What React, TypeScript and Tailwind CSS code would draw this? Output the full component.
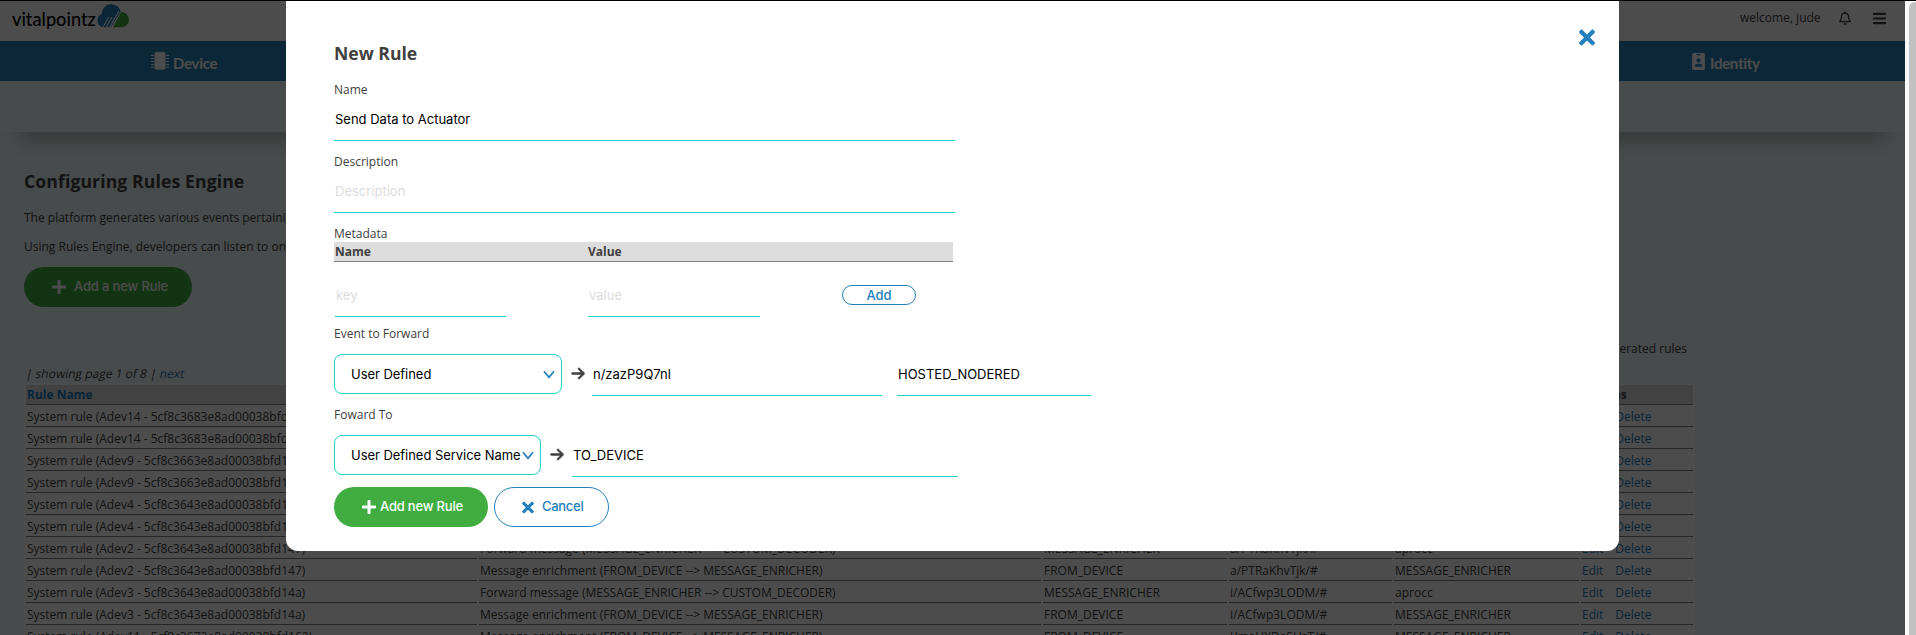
import type { ReactNode } from "react";
import { FaBars, FaIdBadge, FaPlus, FaRegBell, FaTimes } from "react-icons/fa";
import { FaArrowRight } from "react-icons/fa6";

type Rule = {
  name: string;
  description: string;
  source: string;
  topic: string;
  target: string;
};

const FORWARD = "Forward message (MESSAGE_ENRICHER --> CUSTOM_DECODER)";
const ENRICH = "Message enrichment (FROM_DEVICE --> MESSAGE_ENRICHER)";

function forward(name: string, topic: string): Rule {
  return { name, description: FORWARD, source: "MESSAGE_ENRICHER", topic, target: "aprocc" };
}

function enrich(name: string, topic: string): Rule {
  return { name, description: ENRICH, source: "FROM_DEVICE", topic, target: "MESSAGE_ENRICHER" };
}

const rules: Rule[] = [
  forward("System rule (Adev14 - 5cf8c3683e8ad00038bfd15c)", "i/ACfwp3LODM/#"),
  enrich("System rule (Adev14 - 5cf8c3683e8ad00038bfd15c)", "i/ACfwp3LODM/#"),
  forward("System rule (Adev9 - 5cf8c3663e8ad00038bfd156)", "i/ACfwp3LODM/#"),
  enrich("System rule (Adev9 - 5cf8c3663e8ad00038bfd156)", "i/ACfwp3LODM/#"),
  forward("System rule (Adev4 - 5cf8c3643e8ad00038bfd14d)", "i/ACfwp3LODM/#"),
  enrich("System rule (Adev4 - 5cf8c3643e8ad00038bfd14d)", "i/ACfwp3LODM/#"),
  forward("System rule (Adev2 - 5cf8c3643e8ad00038bfd147)", "a/PTRaKhvTjk/#"),
  enrich("System rule (Adev2 - 5cf8c3643e8ad00038bfd147)", "a/PTRaKhvTjk/#"),
  forward("System rule (Adev3 - 5cf8c3643e8ad00038bfd14a)", "i/ACfwp3LODM/#"),
  enrich("System rule (Adev3 - 5cf8c3643e8ad00038bfd14a)", "i/ACfwp3LODM/#"),
  enrich("System rule (Adev11 - 5cf8c3673e8ad00038bfd162)", "i/maHXDaSHzT/#"),
];

const GRID = "grid grid-cols-[451px_562px_184px_163px_185px_112px] gap-x-[2px]";

function Cell({ children, className = "" }: { children?: ReactNode; className?: string }) {
  return (
    <div className={`h-5 whitespace-nowrap border-b border-[#808080] pl-px leading-[19px] ${className}`}>
      {children}
    </div>
  );
}

function Logo() {
  return (
    <div className="flex items-start pl-3 pt-[4px]">
      <span className="mt-[3px] w-[85px] whitespace-nowrap font-['Lato',sans-serif] text-[18.2px] font-medium leading-6 text-black">
        vitalpointz
      </span>
      <svg width="32" height="24" viewBox="0 0 96 72">
        <path d="M20 70 A21 21 0 0 1 14 30 A29 29 0 0 1 71 22 L42 70 Z" fill="#2480bd" />
        <path d="M48 70 L72 24 A23 23 0 1 1 74 70 Z" fill="#41ad41" />
        <path d="M17 71 L35 39 M27 71 L45 39 M37 71 L66 21" stroke="#fff" strokeWidth="3.4" />
      </svg>
    </div>
  );
}

function ChipIcon() {
  return (
    <svg width="18" height="18" viewBox="0 0 18 18" fill="#fff">
      <rect x="3.5" y="0" width="11" height="17.5" rx="1.6" />
      <path
        d="M0 3.5h3M0 6.5h3M0 9.5h3M0 12.5h3M0 15h3M15 3.5h3M15 6.5h3M15 9.5h3M15 12.5h3M15 15h3"
        stroke="#fff"
        strokeWidth="1.2"
      />
    </svg>
  );
}

function Chevron() {
  return (
    <svg width="12" height="9" viewBox="0 0 12 9" fill="none" stroke="#2480bd" strokeWidth="1.7">
      <path d="M1 1.2 L6 7.4 L11 1.2" />
    </svg>
  );
}

function Arrow() {
  return (
    <FaArrowRight
      className="ml-[9px] mt-[12px] h-[15px] w-[14px] shrink-0 overflow-visible text-[#404040]"
      stroke="currentColor"
      strokeWidth="18"
    />
  );
}

function Page() {
  return (
    <div className="flex h-[635px] w-[1905px] flex-col overflow-hidden bg-[#f0fafa]">
      <header className="flex h-[41px] shrink-0 justify-between bg-white">
        <Logo />
        <div className="flex h-9 items-center pr-[19px] text-[#404040]">
          <span className="w-[99px] text-[12px]">welcome, jude</span>
          <FaRegBell className="h-[14px] w-[12px]" />
          <FaBars className="ml-[22px] h-[15px] w-[13px]" />
        </div>
      </header>
      <nav className="flex h-10 shrink-0 items-center justify-between bg-[#2882b8] pl-[151px] pr-[145px] font-['Lato',sans-serif] text-[15px] font-bold tracking-[-0.3px] text-white">
        <div className="flex items-center gap-[4px]">
          <ChipIcon />
          <span className="pt-1">Device</span>
        </div>
        <div className="flex items-center gap-[5px]">
          <FaIdBadge className="h-[17px] w-[13px]" />
          <span className="w-[50px] pt-1">Identity</span>
        </div>
      </nav>
      <div className="h-[51px] shrink-0 bg-[#f0fafa] shadow-[0_24px_20px_-20px_rgba(0,0,0,0.45)]" />

      <main className="flex flex-col text-[12px] text-[#404040]">
        <div className="flex flex-col items-start pl-6 pt-[37px]">
          <h1 className="text-[17.6px] font-bold leading-6 tracking-[0.11px]">Configuring Rules Engine</h1>
          <p className="mt-[15px] whitespace-nowrap leading-[19px]">
            The platform generates various events pertaining to devices
          </p>
          <p className="mt-[10px] whitespace-nowrap leading-[19px]">
            Using Rules Engine, developers can listen to one or more events
          </p>
          <button className="mt-[11px] flex h-10 w-[168px] items-center rounded-full bg-[#41ad41] pl-[27px] font-['Inter',sans-serif] text-[13px] font-medium text-white">
            <FaPlus className="mr-[7px] h-[16px] w-[16px]" />
            <span className="tracking-[-0.15px]">Add a new Rule</span>
          </button>
        </div>
        <div className="mt-[33px] w-[1687px] text-right leading-[18px]">system generated rules</div>
        <div className="mt-[7px] w-[200px] -skew-x-12 pl-[26px] leading-[18px]">
          | showing page 1 of 8 | <a className="text-[#1c7ab8]">next</a>
        </div>
        <div className="ml-6 flex w-[1671px] flex-col gap-[2px] bg-white px-[2px] pt-[2px]">
          <div className={`${GRID} font-bold`}>
            <Cell className="bg-[#ddd] text-[#1c7ab8]">Rule Name</Cell>
            <Cell className="bg-[#ddd]">Description</Cell>
            <Cell className="bg-[#ddd]">Source</Cell>
            <Cell className="bg-[#ddd]">Topic</Cell>
            <Cell className="bg-[#ddd]">Destination</Cell>
            <Cell className="bg-[#ddd]">Actions</Cell>
          </div>
          {rules.map((rule, i) => (
            <div key={i} className={GRID}>
              <Cell>{rule.name}</Cell>
              <Cell>{rule.description}</Cell>
              <Cell>{rule.source}</Cell>
              <Cell>{rule.topic}</Cell>
              <Cell>{rule.target}</Cell>
              <Cell className="text-[#1c7ab8]">
                <a className="mr-[12px]">Edit</a>
                <a>Delete</a>
              </Cell>
            </div>
          ))}
        </div>
      </main>
    </div>
  );
}

function Label({ children, className = "" }: { children: ReactNode; className?: string }) {
  return <label className={`block text-[12px] leading-[18px] text-[#404040] ${className}`}>{children}</label>;
}

function Field({ value, placeholder, className = "" }: { value?: string; placeholder?: string; className?: string }) {
  return (
    <input
      defaultValue={value}
      placeholder={placeholder}
      className={`h-[42px] border-b border-[#1dd3c5] bg-transparent pb-[2px] pl-px font-['Inter',sans-serif] text-[13px] text-black outline-none placeholder:text-[#dcdcdc] ${className}`}
    />
  );
}

function Select({ value, className = "" }: { value: string; className?: string }) {
  return (
    <div
      className={`flex h-10 items-center justify-between whitespace-nowrap rounded-lg border border-[#1dd3c5] pl-4 pr-[6px] font-['Inter',sans-serif] text-[13px] tracking-[-0.04px] text-black ${className}`}
    >
      <span className="pt-px">{value}</span>
      <Chevron />
    </div>
  );
}

function RuleModal() {
  return (
    <section className="relative flex h-[550px] w-[1333px] flex-col rounded-b-xl bg-white pl-12 pt-10">
      <button className="absolute right-[23px] top-[25px] flex text-[#2480bd]">
        <FaTimes className="h-[23px] w-[18px]" />
      </button>
      <h2 className="text-[17.6px] font-bold leading-6 text-[#404040]">New Rule</h2>
      <Label className="mt-4">Name</Label>
      <Field value="Send Data to Actuator" className="w-[621px]" />
      <Label className="mt-3">Description</Label>
      <Field placeholder="Description" className="w-[621px]" />
      <Label className="mt-3 h-[17px]">Metadata</Label>
      <div className="flex h-5 w-[619px] border-b border-[#808080] bg-[#ddd] pl-px text-[12px] font-bold leading-[19px] text-[#404040]">
        <span className="w-[253px]">Name</span>
        <span>Value</span>
      </div>
      <div className="flex pl-px pt-[13px]">
        <Field placeholder="key" className="w-[171px]" />
        <Field placeholder="value" className="ml-[82px] w-[172px]" />
        <button className="ml-[82px] mt-[10px] h-5 w-[74px] rounded-full border border-[#2480bd] font-['Inter',sans-serif] text-[13px] font-medium leading-[18px] text-[#2480bd]">
          Add
        </button>
      </div>
      <Label className="mt-2">Event to Forward</Label>
      <div className="mt-[11px] flex">
        <Select value="User Defined" className="w-[228px]" />
        <Arrow />
        <Field value="n/zazP9Q7nl" className="ml-[7px] w-[290px]" />
        <Field value="HOSTED_NODERED" className="ml-[15px] w-[194px]" />
      </div>
      <Label className="mt-[10px]">Foward To</Label>
      <div className="mt-[11px] flex">
        <Select value="User Defined Service Name" className="w-[207px]" />
        <Arrow />
        <Field value="TO_DEVICE" className="ml-[8px] w-[386px]" />
      </div>
      <div className="mt-[10px] flex gap-[6px] font-['Inter',sans-serif] text-[13px] font-medium">
        <button className="flex h-10 w-[154px] items-center rounded-full bg-[#41ad41] pl-[27px] text-white">
          <FaPlus className="mr-[3px] h-[16px] w-[16px]" />
          <span className="tracking-[-0.2px]">Add new Rule</span>
        </button>
        <button className="flex h-10 w-[115px] items-center rounded-full border border-[#2480bd] pl-[27px] text-[#2480bd]">
          <FaTimes className="mr-[8px] h-[17px] w-[12px]" />
          <span className="tracking-[-0.3px]">Cancel</span>
        </button>
      </div>
    </section>
  );
}

export default function App() {
  return (
    <div className="relative flex h-[635px] w-[1916px] overflow-hidden bg-[#fafafa] font-['Open_Sans',sans-serif]">
      <Page />
      <div className="ml-1 mt-[2px] h-[640px] w-[7px] rounded-tl-md bg-[#c1c1c1]" />
      <div className="absolute left-0 top-0 flex h-[635px] w-[1905px] items-start bg-black/70 pl-[286px] pt-px">
        <RuleModal />
      </div>
      <div className="absolute left-0 top-0 h-px w-full bg-black" />
    </div>
  );
}
